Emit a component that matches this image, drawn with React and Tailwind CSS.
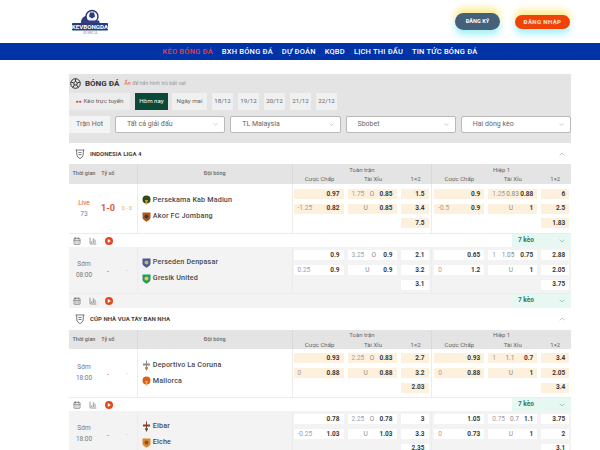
import React from "react";
import { CalendarDays, BarChart3, ChevronDown, ChevronUp, Play } from "lucide-react";

const navItems = ["KÈO BÓNG ĐÁ", "BXH BÓNG ĐÁ", "DỰ ĐOÁN", "KQBD", "LỊCH THI ĐẤU", "TIN TỨC BÓNG ĐÁ"];
const dates = ["18/12", "19/12", "20/12", "21/12", "22/12"];
const filters = ["Tất cả giải đấu", "TL Malaysia", "Sbobet", "Hai dòng kèo"];

const leagues = [
  {
    name: "INDONESIA LIGA 4",
    matches: [
      {
        live: true,
        height: "h-[49px]",
        time: ["Live", "73"],
        score: "1-0",
        half: "0 - 0",
        teams: [["Persekama Kab Madiun", "#2f4a1e", "#c9a227", "round"], ["Akor FC Jombang", "#b4561c", "#3c3c3c", "shield"]],
        full: [["", "0.97"], ["-1.25", "0.82"], ["1.75", "0.85"], ["", "0.85"], ["1.5", "3.4", "7.5"]],
        first: [["", "0.9"], ["-0.5", "0.9"], ["1.25", "0.83", "0.88"], ["", "1"], ["6", "2.5", "1.83"]],
      },
      {
        height: "h-[46px]",
        time: ["Sớm", "08:00"],
        teams: [["Perseden Denpasar", "#4a5a96", "#c9b27a", "shield"], ["Gresik United", "#1f9a6b", "#e4d13a", "shield"]],
        full: [["", "0.9"], ["0.25", "0.9"], ["3.25", "0.9"], ["", "0.9"], ["2.1", "3.2", "3.1"]],
        first: [["", "0.65"], ["0", "1.2"], ["1", "1.05", "0.75"], ["", "1"], ["2.88", "2.05", "3.75"]],
      },
    ],
  },
  {
    name: "CÚP NHÀ VUA TÂY BAN NHA",
    matches: [
      {
        height: "h-[48px]",
        time: ["Sớm", "18:00"],
        teams: [["Deportivo La Coruna", "#8a8a8a", "#c8743a", "cross"], ["Mallorca", "#d9601e", "#e8a04a", "round"]],
        full: [["", "0.93"], ["0", "0.88"], ["2.25", "0.83"], ["", "0.88"], ["2.7", "3.2", "2.03"]],
        first: [["", "0.93"], ["0", "0.88"], ["1", "1.1", "0.7"], ["", "1"], ["3.4", "2.05", "3.4"]],
      },
      {
        height: "h-[46px]",
        time: ["Sớm", "18:00"],
        teams: [["Eibar", "#8c3b2e", "#3f6b4a", "cross"], ["Elche", "#d98a2b", "#9c4a1e", "shield"]],
        full: [["", "0.78"], ["-0.25", "1.03"], ["2.25", "0.78"], ["", "1.03"], ["3", "3.3", "2.35"]],
        first: [["", "1.05"], ["0", "0.73"], ["0.75", "0.7", "1.1"], ["", "1"], ["3.75", "2", "3.1"]],
      },
    ],
  },
];

function Logo() {
  return (
    <svg width="38" height="26" viewBox="0 0 38 26" className="ml-[71px] shrink-0">
      <path d="M10 14 C10 9 13 7 17 6 L17 14 Z" fill="#2b3a7a" />
      <circle cx="21" cy="7.5" r="6" fill="#f4f6fb" stroke="#2b3a7a" strokeWidth="1.4" />
      <path d="M19 3.5 L23 3.5 L24 7.5 L21 9.5 L18 7.5 Z" fill="#2b3a7a" />
      <path d="M13 11.5 L28 11.5 L29 15 L12 15 Z" fill="#33407f" />
      <rect x="1" y="14" width="36" height="7.5" rx="1" fill="#2b3a7a" />
      <text x="19" y="20" textAnchor="middle" fill="#ffffff" fontSize="6.2" fontWeight="700" fontFamily="Roboto, sans-serif">KEVBONGDA</text>
      <text x="19" y="25" textAnchor="middle" fill="#7c84a8" fontSize="2.8" fontFamily="Roboto, sans-serif">SOI KÈO 24</text>
    </svg>
  );
}

function TeamBadge({ main, accent, shape }) {
  return (
    <svg width="9" height="11" viewBox="0 0 9 11" className="shrink-0">
      {shape === "round" && (
        <>
          <circle cx="4.5" cy="4.5" r="4" fill={main} />
          <path d="M3 5 H6 L4.5 10.5 Z" fill={accent} />
        </>
      )}
      {shape === "cross" && (
        <>
          <path d="M4 0.5 H5 V10.5 H4 Z" fill={main} />
          <path d="M1 3.5 H8 V5.5 H1 Z" fill={main} />
          <circle cx="4.5" cy="8" r="1.5" fill={accent} />
        </>
      )}
      {shape === "shield" && (
        <>
          <path d="M0.5 1.5 L8.5 1.5 L8.5 6.5 C8.5 8.5 6 10 4.5 10.8 C3 10 0.5 8.5 0.5 6.5 Z" fill={main} />
          <circle cx="4.5" cy="5.5" r="2" fill={accent} />
        </>
      )}
    </svg>
  );
}

function LeagueIcon() {
  return (
    <svg width="12" height="12" viewBox="0 0 12 12" className="shrink-0" fill="none" stroke="#6b6b6b" strokeWidth="0.9">
      <path d="M1.5 2 H10.5 M2.5 2 L3 8 L6 10.8 L9 8 L9.5 2 M4.5 4.5 H7.5 M4.5 6.5 H7.5" />
    </svg>
  );
}

function Cell({ left, mid, right, cls }) {
  return (
    <div className={`flex h-[10px] items-center justify-between px-[4px] text-[6.5px] leading-none ${cls}`}>
      <span className="text-[#a0a0a0]">{left}</span>
      {mid && <span className="text-[#8a8a8a]">{mid}</span>}
      <span className="font-bold text-[#3a3a3a]">{right}</span>
    </div>
  );
}

function OddsGroup({ odds, cellBg, first }) {
  const [hc1, hc2, ou1, ou2, x12] = odds;
  return (
    <div className={`grid w-[140px] grid-cols-[50px_49px_28px] content-center gap-x-[4px] gap-y-[4.6px] border-l border-[#ececec] ${first ? "pl-[1px]" : "pl-[2px]"}`}>
      <Cell left={hc1[0]} right={hc1[1]} cls={cellBg} />
      <Cell left={ou1[0]} mid={ou1.length === 3 ? ou1[1] : "O"} right={ou1.length === 3 ? ou1[2] : ou1[1]} cls={cellBg} />
      <Cell right={x12[0]} cls={cellBg} />
      <Cell left={hc2[0]} right={hc2[1]} cls={cellBg} />
      <Cell mid="U" right={ou2[1]} cls={cellBg} />
      <Cell right={x12[1]} cls={cellBg} />
      <div className="col-span-2 h-[10px]" />
      <Cell right={x12[2]} cls={cellBg} />
    </div>
  );
}

function TableHead({ height }) {
  return (
    <div className={`flex bg-[#e4e4e4] text-[6px] text-[#666666] ${height}`}>
      <div className="flex w-[30px] justify-center whitespace-nowrap pt-[5px] text-[5.5px] font-medium">Thời gian</div>
      <div className="flex w-[18px] justify-center whitespace-nowrap pt-[5px] text-[5.5px] font-medium">Tỷ số</div>
      <div className="w-[20px]" />
      <div className="flex w-[155px] justify-center border-l border-[#d9d9d9] pt-[5px] text-[5.5px] font-medium">Đội bóng</div>
      {["Toàn trận", "Hiệp 1"].map((title) => (
        <div key={title} className="flex w-[140px] flex-col justify-center border-l border-[#d9d9d9]">
          <div className="flex h-[9px] items-center justify-center">{title}</div>
          <div className="grid h-[10px] grid-cols-[50px_49px_28px] items-center gap-x-[4px] pl-[2px] text-center">
            <span>Cược Chấp</span>
            <span>Tài Xỉu</span>
            <span>1×2</span>
          </div>
        </div>
      ))}
    </div>
  );
}

function MatchRow({ match, shaded }) {
  const cellBg = shaded ? "bg-white" : "bg-[#fdf0dc]";
  return (
    <>
      <div className={`flex ${match.height} ${shaded ? "bg-[#f3f3f3]" : "bg-white"}`}>
        <div className="flex w-[30px] flex-col items-center justify-center gap-[4px] text-[6.5px] leading-[7px] text-[#777777]">
          <span className={match.live ? "text-[#e0603a]" : ""}>{match.time[0]}</span>
          <span className={match.live ? "text-[#4a90c8]" : ""}>{match.time[1]}</span>
        </div>
        <div className={`flex w-[18px] items-center justify-center font-bold text-[#d9573f] ${match.live ? "text-[9px]" : "text-[6px]"}`}>
          {match.score || "-"}
        </div>
        <div className="flex w-[20px] items-center justify-center text-[5.5px] text-[#e8a95c]">{match.half || "-"}</div>
        <div className="flex w-[155px] flex-col justify-center gap-[5px] border-l border-[#ececec] pl-[4px]">
          {match.teams.map(([name, main, accent, shape]) => (
            <div key={name} className="flex h-[11px] items-center gap-[2px] text-[7.2px] font-medium tracking-[0.15px] text-[#4a4a4a]">
              <TeamBadge main={main} accent={accent} shape={shape} />
              {name}
            </div>
          ))}
        </div>
        <OddsGroup odds={match.full} cellBg={cellBg} first />
        <OddsGroup odds={match.first} cellBg={cellBg} />
      </div>
      <div className={`flex items-center border-t border-[#ececec] pl-[4px] ${shaded ? "h-[15px] bg-[#f3f3f3]" : "h-[14px] bg-white"}`}>
        <CalendarDays size={8} color="#666666" />
        <BarChart3 size={8} color="#666666" className="ml-[8px]" />
        <span className="ml-[8px] flex h-[8px] w-[8px] items-center justify-center rounded-full bg-[#e2491f]">
          <Play size={4} color="#ffffff" fill="#ffffff" />
        </span>
        <div className="ml-auto flex h-full w-[59px] items-center justify-between bg-[#e6f8f1] pl-[6px] pr-[5px]">
          <span className="text-[6.5px] font-bold text-[#2c7a5c]">7 kèo</span>
          <ChevronDown size={8} color="#8aa89c" />
        </div>
      </div>
    </>
  );
}

export default function App() {
  return (
    <div className="h-[450px] w-[600px] overflow-hidden bg-white font-['Roboto',sans-serif]">
      <header className="flex h-[43px] items-center">
        <Logo />
        <button className="ml-[346px] flex h-[17px] w-[45px] items-center justify-center rounded-full bg-[#45607a] text-[5.6px] font-bold text-white shadow-[0_-5px_7px_#fde04799,0_5px_7px_#67e8f999]">
          ĐĂNG KÝ
        </button>
        <button className="ml-[15px] flex h-[14px] w-[55px] items-center justify-center rounded-full bg-[#ef4309] text-[6px] font-bold tracking-[0.4px] text-[#ffe9c9] shadow-[0_-5px_7px_#fde04799,0_5px_7px_#67e8f999]">
          ĐĂNG NHẬP
        </button>
      </header>

      <nav className="flex h-[17px] items-center justify-center gap-[9px] bg-[#0033a8] pl-[40px] text-[7.5px] font-medium tracking-[0.2px] text-white">
        {navItems.map((item, i) => (
          <span key={item} className={i === 0 ? "text-[#e8413c]" : ""}>{item}</span>
        ))}
      </nav>

      <main className="ml-[69px] mt-[14px] w-[502px]">
        <section className="h-[69px] bg-[#e4e4e4]">
          <div className="flex h-[19px] items-center pl-[1px]">
            <svg width="11" height="11" viewBox="0 0 11 11" fill="none" stroke="#333333" strokeWidth="1">
              <circle cx="5.5" cy="5.5" r="4.8" />
              <path d="M5.5 3.4 L7.4 4.8 L6.7 7 H4.3 L3.6 4.8 Z M5.5 0.8 V3.4 M1 4.2 L3.6 4.8 M10 4.2 L7.4 4.8 M2.8 9.5 L4.3 7 M8.2 9.5 L6.7 7" />
            </svg>
            <span className="ml-[4px] text-[8px] font-bold text-[#333333]">BÓNG ĐÁ</span>
            <span className="ml-[5px] text-[5.4px] text-[#999999]"><span className="text-[#e0603a]">Ấn</span> để hẩn hình trò bắt vạt</span>
          </div>
          <div className="flex h-[17px] text-[6.2px] text-[#666666]">
            <div className="flex w-[61px] items-center justify-center gap-[2px] whitespace-nowrap bg-[#ededed]">
              <span className="text-[5px] text-[#e0403a]">●●</span>
              Kèo trực tuyến
            </div>
            <div className="ml-[5px] flex w-[33px] items-center justify-center bg-[#0b4a3a] text-white">Hôm nay</div>
            <div className="ml-[4px] flex w-[35px] items-center justify-center bg-[#f0f0f0]">Ngày mai</div>
            {dates.map((d) => (
              <div key={d} className="ml-[5px] flex w-[21px] items-center justify-center bg-[#f0f0f0]">{d}</div>
            ))}
          </div>
          <div className="mt-[6px] flex h-[17px] text-[7px] text-[#666666]">
            <div className="flex w-[41px] items-center justify-center bg-[#f4f4f4]">Trận Hot</div>
            <div className="ml-[5px] grid flex-1 grid-cols-4 gap-[5px]">
              {filters.map((f) => (
                <div key={f} className="flex items-center justify-between rounded-[2px] border border-[#b9b9b9] bg-white pl-[11px] pr-[5px]">
                  {f}
                  <ChevronDown size={7} color="#aaaaaa" />
                </div>
              ))}
            </div>
          </div>
        </section>

        {leagues.map((league, li) => (
          <section key={league.name}>
            <div className={`flex items-center bg-white pl-[5px] pr-[5px] ${li === 0 ? "h-[21px]" : "h-[22px]"}`}>
              <LeagueIcon />
              <span className="ml-[4px] text-[6.1px] font-bold text-[#444444]">{league.name}</span>
              <ChevronUp size={8} color="#aaaaaa" className="ml-auto" />
            </div>
            <TableHead height={li === 0 ? "h-[20px]" : "h-[19px]"} />
            {league.matches.map((m, i) => (
              <MatchRow key={m.teams[0][0]} match={m} shaded={i === 1} />
            ))}
          </section>
        ))}
      </main>
    </div>
  );
}
